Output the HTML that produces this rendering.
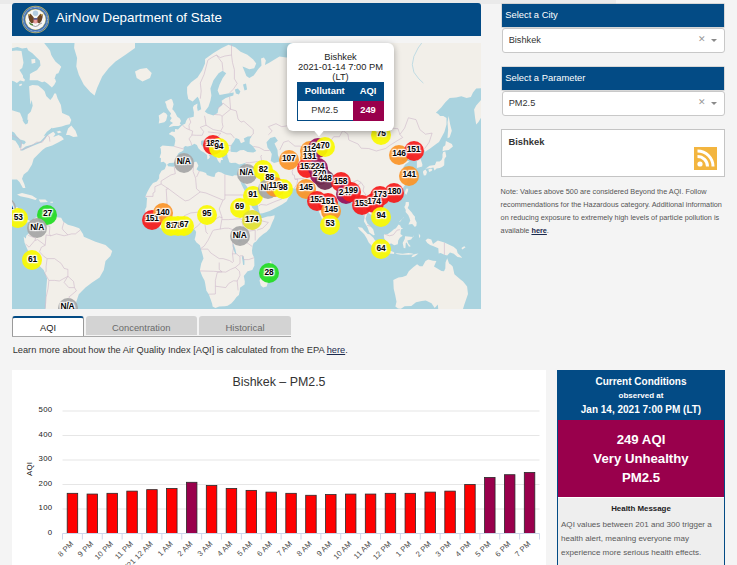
<!DOCTYPE html>
<html><head><meta charset="utf-8">
<style>
*{box-sizing:border-box;margin:0;padding:0}
html,body{width:737px;height:565px;overflow:hidden;background:#f4f4f4;font-family:"Liberation Sans",sans-serif;position:relative}
.abs{position:absolute}
.t{position:absolute;white-space:nowrap}
.mc{position:absolute;width:20px;height:20px;border-radius:50%;opacity:.93}
.mt{position:absolute;width:30px;height:20px;font-size:8.4px;font-weight:bold;line-height:20px;text-align:center;color:#000;letter-spacing:-0.2px;text-shadow:0 0 2px #fff,0 0 2px #fff,0 0 3px #fff,1px 1px 1px #fff,-1px -1px 1px #fff,1px -1px 1px #fff,-1px 1px 1px #fff}
</style></head><body>
<div class="abs" style="left:0;top:0;width:616px;height:4px;background:#eaeaea"></div>
<div class="abs" style="left:12px;top:3px;width:469px;height:33px;background:#034b85;border-radius:3px 3px 0 0"></div>
<svg class="abs" style="left:21px;top:5px" width="29" height="29" viewBox="0 0 29 29">
    <circle cx="14.5" cy="14.5" r="13.7" fill="#cdb85a"/>
    <circle cx="14.5" cy="14.5" r="13.1" fill="#3f70b0"/>
    <circle cx="14.5" cy="14.5" r="12" fill="none" stroke="#c9d6ea" stroke-width="0.9" stroke-dasharray="0.8 0.6"/>
    <circle cx="14.5" cy="14.5" r="10.4" fill="#d9c56a"/>
    <circle cx="14.5" cy="14.5" r="9.9" fill="#f7f7f7"/>
    <circle cx="14.5" cy="8.3" r="2.7" fill="#b3cde3"/>
    <path d="M7.2 9.5 L9.5 8.8 L11.5 11 L13 13 L12.8 17.5 L10.5 18.5 L8.5 16 L7.5 12.5Z" fill="#6b4526"/>
    <path d="M21.8 9.5 L19.5 8.8 L17.5 11 L16 13 L16.2 17.5 L18.5 18.5 L20.5 16 L21.5 12.5Z" fill="#6b4526"/>
    <path d="M7.2 9.5 L9.5 8.8 L8.6 11Z M21.8 9.5 L19.5 8.8 L20.4 11Z" fill="#c9a94a"/>
    <path d="M12.6 13.2 H16.4 V17.6 Q14.5 19.6 12.6 17.6Z" fill="#d65a5a"/>
    <rect x="12.6" y="13.2" width="3.8" height="1.4" fill="#3a5c9c"/>
    <path d="M13.3 14.8 V18 M14.5 14.8 V18.8 M15.7 14.8 V18" stroke="#fff" stroke-width="0.45"/>
    <path d="M8.3 17.5 Q9.5 20 12 20" stroke="#4f8a3a" stroke-width="1.3" fill="none"/>
    <path d="M17 20 L21 18" stroke="#888" stroke-width="0.8"/>
    <path d="M11.5 20.5 Q14.5 22.5 17.5 20.5" stroke="#777" stroke-width="0.7" fill="none"/>
    </svg>
<div class="t" style="left:55.80px;top:10.70px;width:250px;font-size:13.35px;line-height:14.912px;text-align:left;font-weight:normal;color:#fff;">AirNow Department of State</div>
<div class="abs" id="map" style="left:12px;top:43px;width:469px;height:266px;background:#aad3df;overflow:hidden"><svg width="469" height="266" viewBox="0 0 469 266" style="position:absolute;left:0;top:0"><path d="M62.6,-0.8 62.1,5.0 65.1,15.0 64.3,23.4 66.8,31.7 71.8,41.7 78.5,49.2 82.6,52.6 85.1,45.1 90.2,33.4 96.8,25.0 103.5,18.4 113.5,11.7 123.0,5.0 123.0,-0.8ZM25.0,-0.8 31.7,-0.8 36.7,6.7 40.1,13.4 43.4,18.4 49.2,23.4 46.7,29.2 42.6,31.7 41.7,28.4ZM-0.3,-0.3 31.9,-0.3 35.3,4.1 38.0,7.5 39.0,10.9 37.0,13.9 41.4,18.0 47.5,21.7 49.2,24.1 46.8,28.5 44.1,30.9 42.1,37.3 17.6,37.3 18.0,31.9 22.4,29.2 25.1,27.1 28.5,22.4 27.8,17.6 24.4,14.2 20.4,10.2 16.3,7.5 14.9,4.7 10.2,5.4 5.4,4.1 -0.3,5.4ZM19.3,16.3 23.1,15.9 23.4,19.7 19.7,20.7ZM-0.3,8.1 4.1,7.5 9.5,8.1 11.5,19.7 10.2,25.1 7.5,27.1 10.9,32.6 11.5,37.3 -0.3,37.3ZM-0.4,26.6 4.9,26.6 6.5,30.3 10.6,34.3 13.0,36.8 12.2,38.4 8.1,37.6 4.9,40.0 2.4,38.4 -0.4,37.6ZM6.9,41.7 9.4,40.4 10.2,42.1 7.7,43.3ZM17.9,31.1 20.4,29.4 26.1,26.6 44.0,26.6 44.4,31.1 42.3,33.5 44.0,38.4 42.3,41.7 39.9,44.5 35.8,40.8 32.6,38.4 30.1,39.2 24.4,36.8 21.2,35.1 17.9,33.5ZM41.5,26.6 48.0,26.6 46.4,30.3 44.0,31.1ZM-5.0,65.8 8.0,69.7 10.9,76.5 13.8,81.3 15.3,77.4 15.8,71.6 18.7,68.7 20.7,62.8 19.7,57.0 18.4,61.8 17.9,55.5 17.1,43.3 20.4,42.1 26.1,42.5 30.1,45.7 32.6,48.2 34.2,53.1 38.3,57.1 40.7,53.9 42.3,50.6 44.0,50.6 45.6,55.5 48.9,62.0 50.1,70.1 57.1,72.9 59.3,77.1 57.7,81.3 54.0,81.9 49.7,83.5 44.4,84.5 39.2,85.6 34.9,88.7 31.7,93.0 36.0,91.9 41.3,88.7 43.4,90.9 41.3,94.0 46.6,91.9 49.7,93.5 51.9,96.2 46.6,99.3 40.2,102.5 33.9,104.6 30.7,106.7 25.4,112.0 21.7,115.7 20.0,121.5 15.9,128.2 11.7,131.6 10.0,135.7 12.5,141.6 13.4,144.9 10.9,144.9 7.5,139.1 5.0,136.6 -0.8,136.6ZM54.0,91.9 56.1,85.6 59.3,82.4 63.5,87.7 65.6,93.5 61.4,94.0 57.1,91.9ZM44.4,88.7 47.6,87.7 49.7,89.3 46.6,90.3ZM5.0,151.6 10.0,149.9 20.0,152.4 25.0,155.8 23.4,157.1 16.7,154.9 8.3,153.3ZM26.7,156.6 33.4,156.6 35.9,159.1 28.4,159.4ZM38.4,158.8 40.9,158.8 40.9,159.8 38.4,159.8ZM-8.5,164.0 -0.9,164.4 5.7,164.2 7.8,169.9 7.2,173.8 11.4,177.6 15.2,176.6 19.0,178.4 22.8,174.9 27.5,173.2 30.3,171.1 33.2,172.8 36.9,174.7 44.5,174.3 49.2,174.7 51.1,178.6 55.9,181.8 61.5,183.3 67.2,185.2 71.0,190.9 71.8,193.7 83.5,198.7 93.5,202.1 100.2,207.9 98.5,212.9 93.5,217.9 91.8,227.1 87.6,234.6 80.1,239.6 73.5,244.6 66.8,251.3 64.3,258.8 62.6,267.2 33.4,267.2 34.2,247.1 35.1,235.4 31.7,227.1 25.0,220.4 18.4,212.9 15.0,205.4 12.5,199.5 11.7,193.7 13.9,195.6 14.2,192.8 17.1,190.0 19.0,181.4 17.1,178.6 13.3,180.5 8.6,178.6 3.3,174.7 0.1,169.9 -8.5,167.0ZM123.0,28.4 128.0,25.9 134.7,25.0 139.7,30.1 138.0,35.1 130.5,38.4 124.7,35.1ZM152.9,58.8 155.4,57.6 159.1,55.7 160.3,57.0 161.6,61.3 160.3,66.2 161.6,67.5 163.4,70.0 165.3,73.7 167.8,75.5 169.0,78.0 167.8,80.5 169.0,81.7 166.5,83.0 161.6,83.0 156.6,84.2 158.5,81.7 161.0,79.9 157.9,78.0 159.7,74.9 157.9,73.1 159.1,70.6 156.6,67.5 154.8,64.4 154.1,61.3ZM146.7,72.4 151.7,69.3 154.1,70.6 155.4,72.4 154.1,77.4 152.3,79.2 146.7,80.5 147.3,76.8ZM193.1,15.9 201.5,10.0 209.8,5.0 216.5,1.7 223.2,4.2 228.6,8.8 235.4,11.7 241.2,16.6 244.2,20.4 242.2,25.3 237.3,26.3 232.5,24.3 230.5,23.4 232.5,28.2 234.4,33.1 237.3,35.1 241.7,32.6 246.1,26.3 249.5,22.4 249.0,15.6 251.9,14.6 253.9,17.5 252.9,21.9 256.8,20.0 261.7,17.0 267.5,13.6 274.3,14.6 300.0,12.0 310.0,-5.0 475.0,-5.0 475.0,44.8 464.2,45.4 461.0,49.6 458.9,53.9 454.6,54.9 449.3,53.3 444.0,54.4 437.7,54.9 433.4,59.2 429.2,64.5 423.9,69.8 426.0,70.8 428.1,73.0 431.3,73.0 434.5,75.1 434.5,81.5 432.4,88.9 427.0,99.0 424.5,100.7 417.8,105.7 412.8,109.0 412.9,106.2 411.0,110.0 408.5,115.4 410.4,121.6 410.2,123.5 404.9,125.1 404.9,118.1 402.3,114.9 401.0,112.2 396.8,110.8 394.5,110.0 395.5,114.0 391.7,112.2 388.5,114.5 389.8,116.9 391.3,118.8 394.0,117.8 397.6,118.3 393.2,121.6 391.1,124.4 394.2,129.6 396.2,132.5 396.0,134.7 395.5,138.4 391.9,143.7 387.9,148.5 381.7,151.4 379.4,152.4 374.7,153.6 373.7,155.5 372.8,153.0 370.9,152.8 369.0,154.0 367.1,156.1 365.8,158.1 367.5,161.1 370.5,164.0 372.2,168.9 372.2,172.8 368.0,174.9 364.3,178.4 363.3,174.7 360.5,172.8 356.7,170.3 355.7,168.9 354.8,171.8 353.5,175.7 355.4,180.5 357.6,182.4 361.2,186.2 362.7,192.1 361.4,192.2 357.3,189.4 355.4,184.3 352.0,178.6 352.3,174.7 350.8,167.9 350.3,163.0 346.3,164.4 344.0,164.0 344.4,159.1 342.5,156.1 340.2,154.0 339.3,151.0 336.8,151.8 333.0,152.4 330.2,153.4 329.8,155.1 326.4,157.5 323.2,160.7 321.1,162.8 317.9,165.0 317.5,169.7 316.6,175.1 315.1,177.2 312.2,179.3 310.0,176.1 308.4,172.2 306.7,167.9 304.7,163.0 303.3,158.1 303.0,153.4 302.2,152.4 299.6,154.7 296.1,151.4 298.4,150.4 295.2,148.9 292.4,146.2 287.6,145.4 282.1,145.4 276.8,144.6 274.0,144.1 272.1,141.4 268.7,142.5 263.0,139.7 260.6,136.2 257.6,135.2 256.4,136.9 259.4,141.6 260.6,143.3 263.0,143.7 263.2,146.9 265.9,147.5 268.7,147.1 270.6,145.0 272.1,142.9 272.5,146.9 276.3,148.7 278.7,151.0 276.3,155.1 274.8,158.3 270.0,161.5 264.4,164.6 257.7,167.9 250.7,170.3 247.9,170.5 246.6,166.4 246.0,163.0 243.2,157.1 239.8,153.0 237.9,147.9 234.7,143.3 231.8,139.3 231.6,136.2 230.5,139.5 230.3,139.9 227.3,135.4 229.5,141.6 232.8,147.9 236.0,156.9 238.4,160.1 240.3,164.8 243.6,168.3 247.1,172.6 248.8,174.9 250.7,174.9 255.5,173.6 258.7,173.2 262.7,172.2 262.3,174.9 260.2,179.5 257.9,185.2 254.5,189.0 251.3,190.9 247.0,194.7 244.1,198.5 241.7,200.0 240.7,202.5 240.0,207.6 240.3,210.8 242.2,214.7 242.4,222.4 240.3,227.0 235.6,228.3 231.8,232.9 232.8,238.4 232.6,241.5 228.0,244.8 227.8,247.8 226.9,252.1 224.3,254.2 222.4,257.1 219.5,260.2 215.7,262.7 212.9,263.2 207.2,263.4 203.4,265.0 200.6,263.6 200.2,260.9 198.7,256.4 196.8,251.2 194.4,247.8 193.0,239.4 192.5,237.4 190.2,233.3 187.9,227.3 189.2,220.5 191.5,215.6 190.6,211.8 188.9,206.1 187.9,202.3 184.5,199.4 182.6,196.6 183.6,192.8 184.1,189.0 183.0,187.1 181.7,186.0 178.8,186.4 177.0,186.6 175.1,184.1 173.2,182.6 170.3,182.8 167.5,183.3 163.7,185.2 159.9,185.0 157.1,184.8 151.4,186.4 147.6,184.5 143.8,181.6 140.6,178.8 138.2,174.7 136.3,172.8 133.8,170.9 133.1,166.6 134.4,164.0 134.8,158.1 135.1,155.1 133.2,154.0 135.3,148.9 138.2,143.7 141.0,139.9 144.8,138.4 147.1,135.4 147.2,131.9 149.5,127.8 152.7,126.2 154.4,122.1 153.7,120.4 151.6,118.8 148.8,119.3 149.0,115.2 147.6,114.5 149.1,110.0 148.8,105.7 148.0,104.4 150.5,102.6 156.1,103.1 162.2,103.4 163.3,97.8 162.8,95.1 160.9,92.9 156.7,90.9 159.9,88.6 162.8,88.9 163.1,86.0 166.0,86.6 168.6,83.7 170.3,81.9 173.2,80.7 174.3,77.6 176.0,75.1 178.8,74.4 181.7,73.8 181.9,69.6 180.9,64.5 181.9,62.5 185.5,60.4 185.1,64.5 185.8,67.9 189.2,66.2 187.9,59.3 186.8,55.7 185.5,53.8 180.7,58.6 176.2,56.0 175.1,50.0 175.1,44.1 179.2,39.2 185.5,34.5 190.2,27.3 193.0,20.6ZM181.9,104.7 183.6,104.4 183.6,107.5 183.0,108.5 181.9,107.2ZM181.1,109.8 183.2,109.0 184.1,110.8 183.8,114.2 182.4,114.7 181.5,114.2ZM189.1,116.6 191.7,116.4 195.1,116.1 194.2,119.0 194.2,120.2 189.2,117.8ZM210.1,123.2 212.0,122.8 215.4,123.2 214.8,123.9 211.0,123.9ZM226.7,123.9 228.0,123.0 231.1,122.3 229.9,124.2 228.0,124.9ZM316.6,176.1 318.9,178.6 320.6,181.4 319.4,182.9 317.3,183.3 316.6,180.5ZM371.1,157.7 373.7,155.9 375.6,156.9 374.5,159.1 372.8,159.7 371.3,159.1ZM394.5,145.4 396.2,145.8 396.0,147.9 394.2,152.0 392.8,150.0 393.6,146.9ZM411.2,128.0 413.5,126.5 415.0,128.9 414.0,132.3 411.9,132.5 411.0,129.6ZM416.3,126.5 419.1,125.5 420.5,126.7 419.5,128.0 417.2,128.9ZM413.3,125.5 415.3,125.5 419.1,124.9 421.4,124.6 422.5,127.4 424.6,125.5 427.6,124.9 430.1,123.9 432.2,122.3 432.4,116.1 434.3,113.2 433.3,108.5 431.2,109.0 430.5,111.3 430.5,114.5 429.5,116.9 427.6,118.5 424.4,118.5 422.9,122.1 417.6,122.8 414.4,124.9ZM430.5,108.3 432.8,107.5 436.7,107.0 440.9,103.6 439.9,101.0 433.9,98.1 433.3,102.3 431.0,103.9ZM436.6,73.0 438.2,81.5 439.8,87.8 437.7,94.2 435.5,95.3 436.1,86.8 435.5,79.3ZM469.5,56.5 464.2,62.4 462.1,66.6 463.1,75.1 464.2,81.5 466.3,79.3 469.5,74.0ZM393.8,159.1 396.8,159.1 397.0,162.1 395.7,165.0 400.2,169.9 400.6,170.9 403.0,173.8 402.9,176.1 404.7,179.5 404.4,182.8 402.9,184.1 400.2,181.0 396.4,181.4 398.3,177.6 397.4,174.7 396.2,172.0 393.6,168.9 393.8,167.0 392.3,164.0 393.4,162.1ZM387.3,178.6 391.3,175.1 391.9,173.8 390.4,175.7 387.9,179.1ZM371.8,191.9 373.0,190.9 375.6,191.3 379.4,188.6 381.9,186.2 383.9,185.2 386.6,181.6 388.3,182.6 389.2,184.7 391.1,185.2 388.9,186.6 388.5,190.9 390.7,192.8 387.9,194.7 386.2,197.5 385.8,201.3 382.2,202.3 379.4,200.6 376.9,201.1 374.1,200.4 373.7,197.5 372.2,195.6ZM345.9,184.1 350.1,184.8 352.3,187.5 355.7,190.9 357.6,191.3 361.4,194.7 362.7,197.0 365.8,200.0 366.2,203.2 365.8,205.7 363.3,205.1 359.2,202.3 356.7,199.4 354.8,195.6 352.2,191.3 349.9,189.0 347.2,186.6ZM364.6,207.6 367.1,206.1 370.9,207.0 374.7,207.2 378.4,207.8 382.2,209.3 382.0,211.0 377.5,210.5 373.7,210.1 369.9,209.3 366.2,208.7ZM383.2,210.8 385.1,210.3 390.7,210.8 396.4,210.1 400.2,210.5 402.1,211.2 396.4,211.8 388.9,211.8ZM400.6,212.2 403.0,211.0 406.5,210.6 402.1,213.7 399.3,214.3ZM391.7,205.1 393.4,205.3 393.8,200.0 394.5,199.6 397.0,203.8 398.7,203.2 396.4,200.4 395.3,197.5 399.1,196.4 402.1,191.9 401.2,193.9 393.0,193.2 392.8,195.8 390.7,200.0ZM406.8,190.5 408.3,192.8 407.8,195.3 407.0,193.8ZM413.5,197.3 415.9,195.5 419.3,196.4 421.0,200.9 425.8,197.5 432.4,199.6 441.5,203.8 444.7,206.5 445.6,209.9 450.3,214.7 445.6,214.1 441.8,210.8 438.0,209.5 435.2,212.4 432.4,211.8 428.6,210.1 426.7,210.6 426.3,205.3 421.0,203.0 418.2,201.9 415.3,200.0ZM449.4,205.1 452.2,203.2 453.6,204.2 450.3,206.6ZM381.3,237.0 381.7,245.7 383.2,252.1 384.5,258.7 383.4,263.6 386.0,265.5 388.9,265.7 392.6,263.2 399.3,262.9 404.0,259.3 409.7,258.0 413.8,257.5 419.5,260.2 422.7,265.0 425.8,261.4 426.3,267.1 430.5,270.1 436.2,274.2 441.8,274.9 449.4,271.3 452.2,262.0 456.0,251.0 455.1,243.6 451.1,238.4 448.5,236.4 442.4,231.3 440.7,223.4 439.0,221.8 437.1,220.5 435.2,215.3 433.5,219.5 433.3,225.4 432.0,228.3 429.5,227.9 422.0,223.4 424.4,218.0 421.0,217.8 416.3,216.4 413.5,218.0 410.6,223.2 407.8,223.2 405.1,221.3 401.2,224.2 396.8,228.3 394.5,232.5 390.4,233.9 386.4,234.5ZM258.9,217.6 260.6,223.4 259.8,226.4 258.9,229.3 256.4,237.4 254.7,243.4 251.1,244.6 248.8,242.5 247.5,237.4 249.6,232.9 248.8,227.3 253.2,225.0 256.2,221.8Z" fill="#f2efe9"/><path d="M-0.3,88.4 2.2,89.5 4.9,93.3 8.2,96.6 12.5,97.7 13.9,99.3 12.0,101.5 9.8,100.4 9.2,104.2 7.6,105.3 6.5,102.5 3.3,97.7 -0.3,96.6ZM8.2,107.4 13.6,103.6 20.7,101.5 24.5,99.8 28.3,98.5 32.1,94.4 35.3,90.0 40.1,84.6 40.1,86.2 36.4,91.1 33.2,95.5 28.8,99.8 25.0,101.2 21.2,102.8 14.7,105.5 10.9,107.4ZM10.3,76.7 16.3,76.7 15.8,80.3 13.6,81.6 12.0,79.7ZM155.0,121.6 157.3,120.0 161.8,119.7 164.1,117.8 165.0,113.5 166.0,110.8 167.5,109.5 169.8,108.5 171.7,107.0 171.5,104.4 173.2,103.1 175.8,103.6 179.4,102.6 182.4,100.8 184.9,102.1 186.4,105.2 188.9,107.7 192.1,109.5 195.1,112.0 195.3,116.4 196.8,115.7 198.0,114.0 196.8,112.0 200.6,111.8 197.8,109.5 195.9,107.2 192.1,105.5 188.9,101.3 189.2,97.8 191.5,97.3 193.0,99.2 194.9,101.8 196.6,103.1 199.8,105.5 202.3,107.5 202.3,111.0 203.8,113.2 205.1,115.7 205.9,117.8 208.2,120.4 209.1,117.1 211.0,116.9 208.9,110.8 210.8,110.0 214.8,110.0 215.4,112.0 215.4,113.7 216.3,115.7 217.3,119.3 219.0,120.0 223.5,119.7 227.1,121.4 229.9,120.9 233.5,119.7 233.3,122.8 233.5,125.1 232.2,128.5 231.6,130.7 230.5,132.3 226.7,132.5 222.4,132.3 220.5,133.2 212.9,131.6 209.3,129.4 206.3,128.7 203.6,130.3 202.5,134.1 199.3,133.4 194.9,131.9 194.0,130.1 190.6,128.7 186.8,128.0 184.5,126.2 186.4,122.8 185.1,119.7 184.1,118.5 181.7,119.5 177.9,119.3 171.3,119.7 166.0,121.8 164.5,122.3 161.4,123.7 156.1,123.2 155.4,121.8ZM218.6,108.8 218.6,103.6 219.7,101.3 221.8,98.6 223.7,95.1 227.1,96.2 229.0,100.2 232.8,98.6 231.8,95.6 235.6,93.4 239.8,93.2 237.9,95.9 237.5,100.5 240.7,103.1 244.3,108.0 241.3,109.5 235.6,109.0 231.8,107.0 228.0,107.2 224.8,109.3 220.8,109.0ZM254.5,99.2 258.3,95.1 263.0,93.7 265.9,97.8 262.5,100.5 265.5,107.0 265.9,112.0 267.8,116.9 267.6,118.5 262.1,120.0 258.7,118.1 259.8,111.0 257.9,107.5 255.5,104.4ZM198.4,45.5 201.5,37.3 206.6,30.2 210.6,27.7 214.2,30.2 210.6,35.3 207.6,41.4 205.6,47.5 207.6,52.1 215.7,50.6 221.8,49.6 221.3,52.6 213.7,55.1 209.6,57.7 210.6,61.8 206.6,64.8 205.6,69.9 201.5,72.4 195.4,70.4 192.8,68.4 196.4,63.8 198.4,57.7 199.4,52.6ZM222.8,46.5 225.9,45.5 228.4,48.5 226.9,51.6 223.9,50.6ZM231.0,41.4 234.0,40.4 235.1,46.5 232.5,47.5ZM220.8,200.9 221.6,201.3 223.3,206.1 224.3,210.8 223.5,211.0 221.6,207.0 220.7,203.2ZM230.5,212.8 231.4,213.1 232.4,217.6 232.4,221.8 231.1,222.0 230.5,217.6 229.9,214.7ZM225.8,194.3 229.5,194.1 230.5,196.6 229.0,199.8 226.1,199.1 225.4,196.6Z" fill="#aad3df"/><path d="M-14.1,88.1 -2.8,90.9 5.7,95.1 9.5,99.2 8.6,107.0 16.1,104.4 20.9,101.8 24.6,99.2 30.3,99.2 33.2,95.1 35.1,92.3 37.3,93.7 37.9,98.6M29.4,172.8 28.4,177.6 29.4,181.4 37.9,183.3 37.3,190.9 38.8,192.8M52.1,178.6 50.2,185.2 51.1,187.1 55.9,191.9M68.2,187.1 63.4,190.9 59.6,190.9 52.1,192.8 44.5,190.9 38.8,192.8 34.1,191.9 33.2,202.3 29.4,204.2 27.5,208.9 32.2,213.7 35.1,215.6 42.6,215.6 49.2,220.5 52.1,225.4 55.9,226.4 55.9,233.3 61.5,238.4 62.5,244.6 64.4,247.8 56.8,254.2 65.3,262.0M35.1,215.6 34.1,223.4 34.1,228.3 32.6,229.9M36.9,237.4 42.6,237.4 47.3,238.0 55.9,233.3M55.9,233.3 52.1,239.4 56.8,244.6 62.5,244.6M32.6,229.9 36.9,237.4 36.0,245.7 34.1,254.2 33.2,265.5M13.7,201.1 17.1,204.2 22.8,197.5 23.7,195.1 16.1,192.4M33.2,202.3 25.6,196.6 22.8,197.5M155.2,165.0 155.2,163.0 154.2,146.0 156.5,145.8M162.2,123.9 163.3,130.7 159.0,131.9 149.1,138.0 149.1,141.0 156.5,145.8 167.5,154.0 173.2,157.9 177.0,157.1 188.3,148.9M149.1,141.0 142.9,143.7 142.9,148.9 141.0,150.0 141.0,153.4 133.4,153.4M142.9,166.4 144.8,165.0 155.2,165.0M212.9,131.6 212.9,152.0 235.6,152.0M188.3,148.9 194.0,150.0 211.0,157.1 212.9,156.1 212.9,152.0M181.7,119.5 181.1,128.5 183.6,135.2 184.5,145.8 188.3,148.9M187.4,128.0 184.5,134.1M211.0,157.1 207.2,166.0 210.1,174.7 208.2,186.2M172.2,172.8 178.8,169.9 189.2,168.9 192.1,169.9 190.2,177.6 186.4,182.4 181.7,186.0M172.4,182.8 172.4,172.8M159.9,185.0 160.5,173.8M167.9,183.1 165.6,173.8M210.1,176.6 216.7,176.6 228.0,175.7 229.9,176.6M234.7,167.9 231.8,175.7 229.9,178.6 231.8,185.2M246.0,171.8 248.8,177.6 256.4,179.5 250.7,185.2 245.1,187.1M231.8,185.2 237.5,188.1 243.2,187.1 243.2,197.5M229.9,187.1 231.8,192.8 229.9,196.6 236.6,200.8 240.3,203.6M188.7,206.1 195.9,206.1 198.7,209.9 207.2,215.6 211.0,215.6 217.6,217.6 220.5,219.5 221.4,218.5 220.5,210.8 221.4,205.1 220.5,199.4 222.4,191.9 224.3,190.3 223.3,187.5 216.7,185.2 212.9,185.2 207.2,186.2 201.5,187.1 200.6,188.1 198.7,191.9 195.9,197.5 192.1,203.2 188.7,205.5M193.0,171.8 195.9,179.5 201.5,177.6 207.2,173.8 210.1,174.7M193.0,181.4 194.0,189.0 195.9,190.9M187.9,227.9 201.5,228.3 210.1,228.9 213.8,229.1 218.6,226.4 223.3,224.4 228.0,220.5 228.0,213.7 224.3,210.8 220.5,210.8M207.2,219.5 207.2,226.4 210.1,228.9M223.3,224.4 227.5,228.3 228.0,232.3 225.2,238.0M196.8,251.2 203.4,251.0 203.4,243.2 213.8,244.6 216.7,240.5 221.4,237.8 225.2,238.0 226.1,247.4M203.4,243.2 203.4,237.4 205.3,229.3 210.1,228.9M242.2,214.7 236.6,216.6 231.8,216.6 230.9,212.8 228.0,212.8M162.2,103.4 171.7,106.0M170.3,81.9 173.5,85.1 177.0,86.6 180.7,88.1 179.8,92.3 177.0,95.9 178.8,99.2 179.8,102.3M177.0,74.8 178.8,79.1 177.0,82.2 177.3,86.6M179.8,92.0 184.5,92.3 190.2,92.3 191.7,88.6 188.3,84.3 194.0,82.2 193.2,76.0 192.5,72.8M194.0,82.2 201.2,86.6 208.7,88.1 211.0,83.7 210.1,79.1 210.1,73.2 208.2,71.9 202.5,71.5M205.3,66.2 211.0,60.0 218.6,66.2 217.6,53.8M210.1,73.2 218.6,66.2 224.3,67.9 226.1,76.0 229.0,79.1 231.8,78.2 241.3,86.6 241.3,90.9 238.4,93.7M208.7,88.1 214.8,90.9 219.0,90.9 222.4,95.1M208.2,101.8 219.5,102.6M195.9,88.9 208.7,90.3 203.4,96.5 197.8,96.5 195.9,94.3M191.5,97.3 195.9,95.1 201.5,97.0 208.2,101.3 209.1,105.7 208.2,109.0 204.4,109.5 202.3,107.2M215.4,107.7 218.6,107.0M208.9,108.8 214.8,108.3M188.3,55.7 189.2,48.1 188.3,40.0 192.1,31.4 195.9,17.1 199.7,14.6 204.4,12.0 208.2,14.6 212.9,13.0 219.5,12.0 219.5,1.5M211.0,27.8 210.1,19.6 204.4,12.0M217.6,50.0 221.4,46.1 225.2,40.5 222.4,35.8 222.4,26.8 220.5,19.6 219.5,12.0M233.7,119.7 237.5,119.7 246.0,118.5 249.8,118.8 248.8,113.2 249.8,112.0M241.3,103.4 247.0,104.4 252.6,107.5 257.6,107.5M231.8,136.2 235.6,133.0 239.4,130.7 245.1,133.0 250.7,136.2 255.5,137.3M239.4,130.7 239.0,127.6 235.2,130.1M249.8,118.8 251.7,123.9 252.6,128.5 255.5,130.7 256.4,135.2M246.6,163.2 248.8,161.5 254.5,162.1 264.0,158.1 269.7,156.1 270.6,150.6 264.0,148.9M281.4,120.4 281.0,126.2 280.1,128.5 280.8,131.9 282.3,132.1 282.9,136.2 285.7,136.2 284.8,141.6 282.1,145.4M282.9,136.2 291.4,135.4 294.3,131.9 298.0,130.7 299.9,126.2 300.9,120.4 306.6,119.3M267.8,118.5 273.4,116.9 279.1,118.1 281.4,120.4 286.7,121.6 291.4,118.1 294.3,118.8 299.9,117.1 306.6,118.1M256.4,91.8 260.2,88.1 256.4,83.7 264.0,80.7 269.7,83.7 275.3,82.8 282.0,82.2 280.1,77.6 281.0,72.8 288.6,70.9 296.1,68.6 304.7,72.8 310.3,72.8 313.2,76.3 317.0,82.2 322.6,82.2 326.4,85.7 330.8,87.5M267.8,107.0 271.6,99.2 276.3,97.8 282.9,103.1 288.6,103.1 294.3,109.5 299.9,105.7 305.6,103.9 317.0,104.9 317.9,99.2 321.7,93.7 327.4,93.7 330.8,87.5M330.8,87.5 335.9,91.2 336.8,97.0 346.1,101.0 349.1,105.2 356.7,105.5 364.3,108.0 373.7,105.5 377.5,102.6 385.1,97.8 390.7,94.5 387.9,91.5 392.6,85.1 396.4,74.8 404.0,76.6 407.8,86.6 413.5,91.2 420.1,90.1 417.2,99.2 413.5,104.4 412.5,105.7M330.8,87.5 339.7,83.4 351.0,79.1 358.6,84.3 366.2,84.3 370.9,87.2 379.4,85.1 386.0,85.7 387.9,91.5M306.6,119.3 312.2,122.8 315.1,128.5 315.1,133.0 318.9,135.2 324.5,138.4 332.1,139.9 334.0,139.5 339.7,139.9 345.3,137.3 349.1,139.5 352.0,143.7 351.0,147.9 353.9,152.0 357.6,153.0 358.6,151.0 366.2,150.4 369.9,152.8M317.0,104.9 307.5,112.0 306.6,119.3M295.2,148.7 299.9,146.9 299.0,140.6 304.7,135.2 306.6,129.6 305.6,125.1M333.0,152.4 334.0,143.7 339.7,145.8 340.6,151.0 343.4,147.9 345.3,142.7 349.1,139.5M352.0,175.7 352.9,169.9 352.0,163.0 350.1,159.1 354.8,155.1 357.6,153.0M359.0,171.4 364.3,167.6 369.0,167.0 369.0,164.0 364.3,159.1 362.4,156.1 358.6,151.0M404.9,117.6 408.7,115.7M355.2,182.4 358.6,183.3M373.0,191.3 377.5,192.8 381.3,191.9 385.1,187.1 387.9,186.7M432.4,199.6 432.4,211.8" fill="none" stroke="#cdb7c9" stroke-width="0.6"/><path d="M410.3,-0.8 406.1,5.0 401.9,13.4 400.3,21.7 401.9,29.2 406.9,35.9 411.4,40.1" fill="none" stroke="#aad3df" stroke-width="0.7"/></svg><div class="mc" style="left:-15.7px;top:155.0px;background:#a6a6a6"></div><div class="mc" style="left:-3.7px;top:165.4px;background:#fafa00"></div><div class="mc" style="left:25.4px;top:161.5px;background:#22dd22"></div><div class="mc" style="left:15.2px;top:175.2px;background:#a6a6a6"></div><div class="mc" style="left:10.4px;top:207.3px;background:#fafa00"></div><div class="mc" style="left:45.5px;top:255.0px;background:#a6a6a6"></div><div class="mc" style="left:130.1px;top:166.6px;background:#f61a1a"></div><div class="mc" style="left:140.8px;top:160.3px;background:#fb9528"></div><div class="mc" style="left:148.5px;top:173.4px;background:#fafa00"></div><div class="mc" style="left:155.5px;top:173.4px;background:#fafa00"></div><div class="mc" style="left:162.0px;top:172.5px;background:#fafa00"></div><div class="mc" style="left:161.6px;top:109.9px;background:#a6a6a6"></div><div class="mc" style="left:190.6px;top:92.0px;background:#f61a1a"></div><div class="mc" style="left:196.8px;top:94.9px;background:#fafa00"></div><div class="mc" style="left:184.8px;top:161.5px;background:#fafa00"></div><div class="mc" style="left:217.5px;top:154.5px;background:#fafa00"></div><div class="mc" style="left:230.8px;top:143.0px;background:#fafa00"></div><div class="mc" style="left:229.8px;top:167.3px;background:#e0e030"></div><div class="mc" style="left:217.6px;top:183.3px;background:#a6a6a6"></div><div class="mc" style="left:224.5px;top:120.7px;background:#a6a6a6"></div><div class="mc" style="left:241.2px;top:117.3px;background:#fafa00"></div><div class="mc" style="left:247.6px;top:126.0px;background:#fafa00"></div><div class="mc" style="left:245.5px;top:135.6px;background:#a6a6a6"></div><div class="mc" style="left:252.9px;top:133.5px;background:#fb9528"></div><div class="mc" style="left:261.0px;top:135.8px;background:#fafa00"></div><div class="mc" style="left:266.7px;top:106.7px;background:#fb9528"></div><div class="mc" style="left:287.5px;top:98.0px;background:#fb9528"></div><div class="mc" style="left:287.5px;top:104.5px;background:#fb9528"></div><div class="mc" style="left:296.0px;top:94.5px;background:#980f58"></div><div class="mc" style="left:303.0px;top:94.0px;background:#fafa00"></div><div class="mc" style="left:284.5px;top:115.0px;background:#f61a1a"></div><div class="mc" style="left:295.5px;top:115.0px;background:#980f58"></div><div class="mc" style="left:297.5px;top:122.0px;background:#980f58"></div><div class="mc" style="left:303.0px;top:127.0px;background:#6e2a4e"></div><div class="mc" style="left:284.0px;top:135.5px;background:#fb9528"></div><div class="mc" style="left:318.5px;top:129.3px;background:#f61a1a"></div><div class="mc" style="left:323.5px;top:140.5px;background:#980f58"></div><div class="mc" style="left:329.0px;top:138.5px;background:#f61a1a"></div><div class="mc" style="left:294.6px;top:147.6px;background:#f61a1a"></div><div class="mc" style="left:306.0px;top:150.0px;background:#f61a1a"></div><div class="mc" style="left:309.0px;top:158.0px;background:#fb9528"></div><div class="mc" style="left:307.9px;top:171.6px;background:#fafa00"></div><div class="mc" style="left:339.5px;top:152.0px;background:#f61a1a"></div><div class="mc" style="left:352.0px;top:149.5px;background:#f61a1a"></div><div class="mc" style="left:358.0px;top:143.0px;background:#f61a1a"></div><div class="mc" style="left:372.3px;top:139.6px;background:#f61a1a"></div><div class="mc" style="left:387.3px;top:122.7px;background:#fb9528"></div><div class="mc" style="left:377.0px;top:102.0px;background:#fb9528"></div><div class="mc" style="left:391.5px;top:97.5px;background:#f61a1a"></div><div class="mc" style="left:359.3px;top:81.5px;background:#fafa00"></div><div class="mc" style="left:359.0px;top:163.5px;background:#fafa00"></div><div class="mc" style="left:359.0px;top:196.3px;background:#fafa00"></div><div class="mc" style="left:247.0px;top:220.3px;background:#22dd22"></div><div class="mt" style="left:-20.7px;top:153.4px">N/A</div><div class="mt" style="left:-8.7px;top:163.8px">53</div><div class="mt" style="left:20.4px;top:159.9px">27</div><div class="mt" style="left:10.2px;top:173.6px">N/A</div><div class="mt" style="left:5.4px;top:205.7px">61</div><div class="mt" style="left:40.5px;top:253.4px">N/A</div><div class="mt" style="left:125.1px;top:165.0px">151</div><div class="mt" style="left:135.8px;top:158.7px">140</div><div class="mt" style="left:143.5px;top:171.8px">81</div><div class="mt" style="left:150.5px;top:171.8px">78</div><div class="mt" style="left:157.0px;top:170.9px">67</div><div class="mt" style="left:156.6px;top:108.3px">N/A</div><div class="mt" style="left:185.6px;top:90.4px">188</div><div class="mt" style="left:191.8px;top:93.3px">94</div><div class="mt" style="left:179.8px;top:159.9px">95</div><div class="mt" style="left:212.5px;top:152.9px">69</div><div class="mt" style="left:225.8px;top:141.4px">91</div><div class="mt" style="left:224.8px;top:165.7px">174</div><div class="mt" style="left:212.6px;top:181.7px">N/A</div><div class="mt" style="left:219.5px;top:119.1px">N/A</div><div class="mt" style="left:236.2px;top:115.7px">82</div><div class="mt" style="left:242.6px;top:124.4px">88</div><div class="mt" style="left:240.5px;top:134.0px">N/A</div><div class="mt" style="left:247.9px;top:131.9px">118</div><div class="mt" style="left:256.0px;top:134.2px">98</div><div class="mt" style="left:261.7px;top:105.1px">107</div><div class="mt" style="left:282.5px;top:96.4px">113</div><div class="mt" style="left:282.5px;top:102.9px">131</div><div class="mt" style="left:291.0px;top:92.9px">249</div><div class="mt" style="left:298.0px;top:92.4px">70</div><div class="mt" style="left:279.5px;top:113.4px">152</div><div class="mt" style="left:290.5px;top:113.4px">224</div><div class="mt" style="left:292.5px;top:120.4px">270</div><div class="mt" style="left:298.0px;top:125.4px">448</div><div class="mt" style="left:279.0px;top:133.9px">145</div><div class="mt" style="left:313.5px;top:127.7px">158</div><div class="mt" style="left:318.5px;top:138.9px">247</div><div class="mt" style="left:324.0px;top:136.9px">199</div><div class="mt" style="left:289.6px;top:146.0px">152</div><div class="mt" style="left:301.0px;top:148.4px">151</div><div class="mt" style="left:304.0px;top:156.4px">145</div><div class="mt" style="left:302.9px;top:170.0px">53</div><div class="mt" style="left:334.5px;top:150.4px">153</div><div class="mt" style="left:347.0px;top:147.9px">174</div><div class="mt" style="left:353.0px;top:141.4px">173</div><div class="mt" style="left:367.3px;top:138.0px">180</div><div class="mt" style="left:382.3px;top:121.1px">141</div><div class="mt" style="left:372.0px;top:100.4px">146</div><div class="mt" style="left:386.5px;top:95.9px">151</div><div class="mt" style="left:354.3px;top:79.9px">75</div><div class="mt" style="left:354.0px;top:161.9px">94</div><div class="mt" style="left:354.0px;top:194.7px">64</div><div class="mt" style="left:242.0px;top:218.7px">28</div></div>
<div class="abs" style="left:287px;top:42.5px;width:107px;height:88.5px;background:#fff;border-radius:6px;box-shadow:0 2px 7px rgba(0,0,0,.33)"></div>
<svg class="abs" style="left:311px;top:127px" width="16" height="12" viewBox="0 0 16 12"><path d="M0 0 L16 0 L8 9.5Z" fill="#fff"/></svg>
<div class="t" style="left:287.00px;top:52.13px;width:107px;font-size:9.3px;line-height:10.388px;text-align:center;font-weight:normal;color:#222;">Bishkek</div>
<div class="t" style="left:287.00px;top:62.13px;width:107px;font-size:9.3px;line-height:10.388px;text-align:center;font-weight:normal;color:#222;">2021-01-14 7:00 PM</div>
<div class="t" style="left:287.00px;top:72.13px;width:107px;font-size:9.3px;line-height:10.388px;text-align:center;font-weight:normal;color:#222;">(LT)</div>
<div class="abs" style="left:297px;top:82px;width:87px;height:39px;border:1px solid #034b85;background:#fff"></div>
<div class="abs" style="left:297px;top:82px;width:87px;height:18.5px;background:#034b85"></div>
<div class="abs" style="left:352.5px;top:100.5px;width:31.5px;height:20.5px;background:#99004c"></div>
<div class="t" style="left:294.70px;top:86.44px;width:60px;font-size:9.4px;line-height:10.500px;text-align:center;font-weight:bold;color:#fff;">Pollutant</div>
<div class="t" style="left:348.00px;top:86.44px;width:40px;font-size:9.4px;line-height:10.500px;text-align:center;font-weight:bold;color:#fff;">AQI</div>
<div class="t" style="left:294.70px;top:105.33px;width:60px;font-size:9.3px;line-height:10.388px;text-align:center;font-weight:normal;color:#333;">PM2.5</div>
<div class="t" style="left:348.00px;top:105.24px;width:40px;font-size:9.4px;line-height:10.500px;text-align:center;font-weight:bold;color:#fff;">249</div>
<div class="abs" style="left:502px;top:4px;width:222px;height:23px;background:#034b85;box-shadow:0 0 0 0.5px #bbb"></div>
<div class="t" style="left:505.20px;top:10.24px;width:300px;font-size:9.4px;line-height:10.500px;text-align:left;font-weight:normal;color:#fff;">Select a City</div>
<div class="abs" style="left:501.5px;top:28.4px;width:223px;height:24.3px;background:#fff;border:1px solid #c8c8c8;border-radius:3px"></div>
<div class="t" style="left:508.70px;top:35.11px;width:300px;font-size:9.2px;line-height:10.276px;text-align:left;font-weight:normal;color:#333;">Bishkek</div>
<div class="t" style="left:696.00px;top:33.68px;width:12px;font-size:9px;line-height:10.053px;text-align:center;font-weight:normal;color:#999;">✕</div>
<div class="abs" style="left:711px;top:38.5px;width:0;height:0;border-left:3px solid transparent;border-right:3px solid transparent;border-top:3.2px solid #8a8a8a"></div>
<div class="abs" style="left:502px;top:67px;width:222px;height:23px;background:#034b85;box-shadow:0 0 0 0.5px #bbb"></div>
<div class="t" style="left:505.20px;top:73.24px;width:300px;font-size:9.4px;line-height:10.500px;text-align:left;font-weight:normal;color:#fff;">Select a Parameter</div>
<div class="abs" style="left:501.5px;top:91.4px;width:223px;height:24.3px;background:#fff;border:1px solid #c8c8c8;border-radius:3px"></div>
<div class="t" style="left:508.70px;top:98.11px;width:300px;font-size:9.2px;line-height:10.276px;text-align:left;font-weight:normal;color:#333;">PM2.5</div>
<div class="t" style="left:696.00px;top:96.68px;width:12px;font-size:9px;line-height:10.053px;text-align:center;font-weight:normal;color:#999;">✕</div>
<div class="abs" style="left:711px;top:101.5px;width:0;height:0;border-left:3px solid transparent;border-right:3px solid transparent;border-top:3.2px solid #8a8a8a"></div>
<div class="abs" style="left:501.4px;top:129.4px;width:223.2px;height:48px;background:#fff;border:1px solid #c4c4c4"></div>
<div class="t" style="left:508.40px;top:137.04px;width:300px;font-size:9.4px;line-height:10.500px;text-align:left;font-weight:bold;color:#333;">Bishkek</div>
<svg class="abs" style="left:694px;top:147px" width="23" height="23" viewBox="0 0 23 23"><rect width="23" height="23" fill="#f3b53f"/>
    <circle cx="6" cy="17" r="2.6" fill="#fff"/><path d="M3.5 9.5 A10 10 0 0 1 13.5 19.5" stroke="#fff" stroke-width="3" fill="none"/><path d="M3.5 4 A15.5 15.5 0 0 1 19 19.5" stroke="#fff" stroke-width="3" fill="none"/></svg>
<div class="t" style="left:500.60px;top:187.82px;width:240px;font-size:7.3px;line-height:8.154px;text-align:left;font-weight:normal;color:#555;white-space:nowrap">Note: Values above 500 are considered Beyond the AQI. Follow</div>
<div class="t" style="left:500.60px;top:200.82px;width:240px;font-size:7.3px;line-height:8.154px;text-align:left;font-weight:normal;color:#555;white-space:nowrap">recommendations for the Hazardous category. Additional information</div>
<div class="t" style="left:500.60px;top:213.82px;width:240px;font-size:7.3px;line-height:8.154px;text-align:left;font-weight:normal;color:#555;white-space:nowrap">on reducing exposure to extremely high levels of particle pollution is</div>
<div class="t" style="left:500.60px;top:226.82px;width:240px;font-size:7.3px;line-height:8.154px;text-align:left;font-weight:normal;color:#555;white-space:nowrap">available <b style="color:#1b2a4e;text-decoration:underline">here</b>.</div>
<div class="abs" style="left:12px;top:335.5px;width:279px;height:1px;background:#a8a8a8"></div>
<div class="abs" style="left:12px;top:316px;width:71.5px;height:20px;background:#fff;border:1px solid #9a9a9a;border-top:2px solid #034b85;border-bottom:none;border-radius:3px 3px 0 0"></div>
<div class="abs" style="left:86.3px;top:316.4px;width:110.5px;height:19.1px;background:#d3d3d3;border-radius:3px 3px 0 0"></div>
<div class="abs" style="left:199px;top:316.4px;width:92px;height:19.1px;background:#d3d3d3;border-radius:3px 3px 0 0"></div>
<div class="t" style="left:18.00px;top:322.93px;width:60px;font-size:9.3px;line-height:10.388px;text-align:center;font-weight:normal;color:#222;">AQI</div>
<div class="t" style="left:91.20px;top:322.84px;width:100px;font-size:9.4px;line-height:10.500px;text-align:center;font-weight:normal;color:#6a6a6a;">Concentration</div>
<div class="t" style="left:205.00px;top:322.76px;width:80px;font-size:9.5px;line-height:10.611px;text-align:center;font-weight:normal;color:#6a6a6a;">Historical</div>
<div class="t" style="left:12.70px;top:345.07px;width:400px;font-size:9.25px;line-height:10.332px;text-align:left;font-weight:normal;color:#333;white-space:nowrap">Learn more about how the Air Quality Index [AQI] is calculated from the EPA <span style="text-decoration:underline;color:#1b2a4e">here</span>.</div>
<div class="abs" style="left:12px;top:370px;width:534px;height:195px;background:#fff"><svg width="534" height="195" viewBox="0 0 534 195" style="position:absolute;left:0;top:0;font-family:'Liberation Sans',sans-serif"><rect x="50.5" y="138.50" width="477.00" height="1" fill="#e6e6e6"/><rect x="50.5" y="114.00" width="477.00" height="1" fill="#e6e6e6"/><rect x="50.5" y="89.50" width="477.00" height="1" fill="#e6e6e6"/><rect x="50.5" y="65.00" width="477.00" height="1" fill="#e6e6e6"/><rect x="50.5" y="40.50" width="477.00" height="1" fill="#e6e6e6"/><text x="40.5" y="164.90" font-size="7.8" text-anchor="end" fill="#222" letter-spacing="0.3">0</text><text x="40.5" y="140.40" font-size="7.8" text-anchor="end" fill="#222" letter-spacing="0.3">100</text><text x="40.5" y="115.90" font-size="7.8" text-anchor="end" fill="#222" letter-spacing="0.3">200</text><text x="40.5" y="91.40" font-size="7.8" text-anchor="end" fill="#222" letter-spacing="0.3">300</text><text x="40.5" y="66.90" font-size="7.8" text-anchor="end" fill="#222" letter-spacing="0.3">400</text><text x="40.5" y="42.40" font-size="7.8" text-anchor="end" fill="#222" letter-spacing="0.3">500</text><rect x="55.19" y="123.32" width="10.5" height="40.18" fill="#ff0000" stroke="#2a2a2a" stroke-width="0.8"/><rect x="75.06" y="124.06" width="10.5" height="39.45" fill="#ff0000" stroke="#2a2a2a" stroke-width="0.8"/><rect x="94.94" y="123.32" width="10.5" height="40.18" fill="#ff0000" stroke="#2a2a2a" stroke-width="0.8"/><rect x="114.81" y="121.12" width="10.5" height="42.38" fill="#ff0000" stroke="#2a2a2a" stroke-width="0.8"/><rect x="134.69" y="119.65" width="10.5" height="43.85" fill="#ff0000" stroke="#2a2a2a" stroke-width="0.8"/><rect x="154.56" y="118.42" width="10.5" height="45.08" fill="#ff0000" stroke="#2a2a2a" stroke-width="0.8"/><rect x="174.44" y="112.30" width="10.5" height="51.20" fill="#99004c" stroke="#2a2a2a" stroke-width="0.8"/><rect x="194.31" y="115.48" width="10.5" height="48.02" fill="#ff0000" stroke="#2a2a2a" stroke-width="0.8"/><rect x="214.19" y="118.42" width="10.5" height="45.08" fill="#ff0000" stroke="#2a2a2a" stroke-width="0.8"/><rect x="234.06" y="120.38" width="10.5" height="43.12" fill="#ff0000" stroke="#2a2a2a" stroke-width="0.8"/><rect x="253.94" y="122.09" width="10.5" height="41.41" fill="#ff0000" stroke="#2a2a2a" stroke-width="0.8"/><rect x="273.81" y="123.32" width="10.5" height="40.18" fill="#ff0000" stroke="#2a2a2a" stroke-width="0.8"/><rect x="293.69" y="125.28" width="10.5" height="38.22" fill="#ff0000" stroke="#2a2a2a" stroke-width="0.8"/><rect x="313.56" y="124.55" width="10.5" height="38.95" fill="#ff0000" stroke="#2a2a2a" stroke-width="0.8"/><rect x="333.44" y="124.06" width="10.5" height="39.45" fill="#ff0000" stroke="#2a2a2a" stroke-width="0.8"/><rect x="353.31" y="124.06" width="10.5" height="39.45" fill="#ff0000" stroke="#2a2a2a" stroke-width="0.8"/><rect x="373.19" y="123.32" width="10.5" height="40.18" fill="#ff0000" stroke="#2a2a2a" stroke-width="0.8"/><rect x="393.06" y="123.32" width="10.5" height="40.18" fill="#ff0000" stroke="#2a2a2a" stroke-width="0.8"/><rect x="412.94" y="122.09" width="10.5" height="41.41" fill="#ff0000" stroke="#2a2a2a" stroke-width="0.8"/><rect x="432.81" y="121.12" width="10.5" height="42.38" fill="#ff0000" stroke="#2a2a2a" stroke-width="0.8"/><rect x="452.69" y="114.50" width="10.5" height="49.00" fill="#ff0000" stroke="#2a2a2a" stroke-width="0.8"/><rect x="472.56" y="107.40" width="10.5" height="56.10" fill="#99004c" stroke="#2a2a2a" stroke-width="0.8"/><rect x="492.44" y="104.70" width="10.5" height="58.80" fill="#99004c" stroke="#2a2a2a" stroke-width="0.8"/><rect x="512.31" y="102.50" width="10.5" height="61.00" fill="#99004c" stroke="#2a2a2a" stroke-width="0.8"/><rect x="50.5" y="163.00" width="477.00" height="1" fill="#ccd6eb"/><rect x="50.00" y="163.50" width="1" height="6" fill="#ccd6eb"/><rect x="69.88" y="163.50" width="1" height="6" fill="#ccd6eb"/><rect x="89.75" y="163.50" width="1" height="6" fill="#ccd6eb"/><rect x="109.62" y="163.50" width="1" height="6" fill="#ccd6eb"/><rect x="129.50" y="163.50" width="1" height="6" fill="#ccd6eb"/><rect x="149.38" y="163.50" width="1" height="6" fill="#ccd6eb"/><rect x="169.25" y="163.50" width="1" height="6" fill="#ccd6eb"/><rect x="189.12" y="163.50" width="1" height="6" fill="#ccd6eb"/><rect x="209.00" y="163.50" width="1" height="6" fill="#ccd6eb"/><rect x="228.88" y="163.50" width="1" height="6" fill="#ccd6eb"/><rect x="248.75" y="163.50" width="1" height="6" fill="#ccd6eb"/><rect x="268.62" y="163.50" width="1" height="6" fill="#ccd6eb"/><rect x="288.50" y="163.50" width="1" height="6" fill="#ccd6eb"/><rect x="308.38" y="163.50" width="1" height="6" fill="#ccd6eb"/><rect x="328.25" y="163.50" width="1" height="6" fill="#ccd6eb"/><rect x="348.12" y="163.50" width="1" height="6" fill="#ccd6eb"/><rect x="368.00" y="163.50" width="1" height="6" fill="#ccd6eb"/><rect x="387.88" y="163.50" width="1" height="6" fill="#ccd6eb"/><rect x="407.75" y="163.50" width="1" height="6" fill="#ccd6eb"/><rect x="427.62" y="163.50" width="1" height="6" fill="#ccd6eb"/><rect x="447.50" y="163.50" width="1" height="6" fill="#ccd6eb"/><rect x="467.38" y="163.50" width="1" height="6" fill="#ccd6eb"/><rect x="487.25" y="163.50" width="1" height="6" fill="#ccd6eb"/><rect x="507.12" y="163.50" width="1" height="6" fill="#ccd6eb"/><rect x="527.00" y="163.50" width="1" height="6" fill="#ccd6eb"/><text x="61.94" y="174.20" font-size="7.6" text-anchor="end" fill="#4a4a4a" letter-spacing="0.15" transform="rotate(-45 61.94 174.20)">8 PM</text><text x="81.81" y="174.20" font-size="7.6" text-anchor="end" fill="#4a4a4a" letter-spacing="0.15" transform="rotate(-45 81.81 174.20)">9 PM</text><text x="101.69" y="174.20" font-size="7.6" text-anchor="end" fill="#4a4a4a" letter-spacing="0.15" transform="rotate(-45 101.69 174.20)">10 PM</text><text x="121.56" y="174.20" font-size="7.6" text-anchor="end" fill="#4a4a4a" letter-spacing="0.15" transform="rotate(-45 121.56 174.20)">11 PM</text><text x="141.44" y="174.20" font-size="7.6" text-anchor="end" fill="#4a4a4a" letter-spacing="0.15" transform="rotate(-45 141.44 174.20)">1/14/21 12 AM</text><text x="161.31" y="174.20" font-size="7.6" text-anchor="end" fill="#4a4a4a" letter-spacing="0.15" transform="rotate(-45 161.31 174.20)">1 AM</text><text x="181.19" y="174.20" font-size="7.6" text-anchor="end" fill="#4a4a4a" letter-spacing="0.15" transform="rotate(-45 181.19 174.20)">2 AM</text><text x="201.06" y="174.20" font-size="7.6" text-anchor="end" fill="#4a4a4a" letter-spacing="0.15" transform="rotate(-45 201.06 174.20)">3 AM</text><text x="220.94" y="174.20" font-size="7.6" text-anchor="end" fill="#4a4a4a" letter-spacing="0.15" transform="rotate(-45 220.94 174.20)">4 AM</text><text x="240.81" y="174.20" font-size="7.6" text-anchor="end" fill="#4a4a4a" letter-spacing="0.15" transform="rotate(-45 240.81 174.20)">5 AM</text><text x="260.69" y="174.20" font-size="7.6" text-anchor="end" fill="#4a4a4a" letter-spacing="0.15" transform="rotate(-45 260.69 174.20)">6 AM</text><text x="280.56" y="174.20" font-size="7.6" text-anchor="end" fill="#4a4a4a" letter-spacing="0.15" transform="rotate(-45 280.56 174.20)">7 AM</text><text x="300.44" y="174.20" font-size="7.6" text-anchor="end" fill="#4a4a4a" letter-spacing="0.15" transform="rotate(-45 300.44 174.20)">8 AM</text><text x="320.31" y="174.20" font-size="7.6" text-anchor="end" fill="#4a4a4a" letter-spacing="0.15" transform="rotate(-45 320.31 174.20)">9 AM</text><text x="340.19" y="174.20" font-size="7.6" text-anchor="end" fill="#4a4a4a" letter-spacing="0.15" transform="rotate(-45 340.19 174.20)">10 AM</text><text x="360.06" y="174.20" font-size="7.6" text-anchor="end" fill="#4a4a4a" letter-spacing="0.15" transform="rotate(-45 360.06 174.20)">11 AM</text><text x="379.94" y="174.20" font-size="7.6" text-anchor="end" fill="#4a4a4a" letter-spacing="0.15" transform="rotate(-45 379.94 174.20)">12 PM</text><text x="399.81" y="174.20" font-size="7.6" text-anchor="end" fill="#4a4a4a" letter-spacing="0.15" transform="rotate(-45 399.81 174.20)">1 PM</text><text x="419.69" y="174.20" font-size="7.6" text-anchor="end" fill="#4a4a4a" letter-spacing="0.15" transform="rotate(-45 419.69 174.20)">2 PM</text><text x="439.56" y="174.20" font-size="7.6" text-anchor="end" fill="#4a4a4a" letter-spacing="0.15" transform="rotate(-45 439.56 174.20)">3 PM</text><text x="459.44" y="174.20" font-size="7.6" text-anchor="end" fill="#4a4a4a" letter-spacing="0.15" transform="rotate(-45 459.44 174.20)">4 PM</text><text x="479.31" y="174.20" font-size="7.6" text-anchor="end" fill="#4a4a4a" letter-spacing="0.15" transform="rotate(-45 479.31 174.20)">5 PM</text><text x="499.19" y="174.20" font-size="7.6" text-anchor="end" fill="#4a4a4a" letter-spacing="0.15" transform="rotate(-45 499.19 174.20)">6 PM</text><text x="519.06" y="174.20" font-size="7.6" text-anchor="end" fill="#4a4a4a" letter-spacing="0.15" transform="rotate(-45 519.06 174.20)">7 PM</text><text x="267" y="15.800000000000011" font-size="12.4" text-anchor="middle" fill="#333">Bishkek – PM2.5</text><text x="20" y="99" font-size="8" text-anchor="middle" fill="#222" transform="rotate(-90 20 99)">AQI</text></svg></div>
<div class="abs" style="left:557px;top:370px;width:168px;height:195px;background:#eeeeee;border-left:1px solid #034b85;border-right:1px solid #034b85"></div>
<div class="abs" style="left:557px;top:370px;width:168px;height:49.6px;background:#034b85"></div>
<div class="abs" style="left:558px;top:419.6px;width:166px;height:77px;background:#99004c"></div>
<div class="abs" style="left:558px;top:496.6px;width:166px;height:1px;background:#fff"></div>
<div class="t" style="left:557.00px;top:375.54px;width:168px;font-size:10px;line-height:11.170px;text-align:center;font-weight:bold;color:#fff;">Current Conditions</div>
<div class="t" style="left:557.00px;top:391.83px;width:168px;font-size:8px;line-height:8.936px;text-align:center;font-weight:bold;color:#fff;">observed at</div>
<div class="t" style="left:557.00px;top:403.54px;width:168px;font-size:10px;line-height:11.170px;text-align:center;font-weight:bold;color:#fff;">Jan 14, 2021 7:00 PM (LT)</div>
<div class="t" style="left:557.00px;top:433.03px;width:168px;font-size:13.2px;line-height:14.744px;text-align:center;font-weight:bold;color:#fff;">249 AQI</div>
<div class="t" style="left:557.00px;top:452.03px;width:168px;font-size:13.2px;line-height:14.744px;text-align:center;font-weight:bold;color:#fff;">Very Unhealthy</div>
<div class="t" style="left:557.00px;top:471.13px;width:168px;font-size:13.2px;line-height:14.744px;text-align:center;font-weight:bold;color:#fff;">PM2.5</div>
<div class="t" style="left:557.00px;top:504.91px;width:168px;font-size:7.9px;line-height:8.824px;text-align:center;font-weight:bold;color:#222;">Health Message</div>
<div class="t" style="left:561.00px;top:519.99px;width:170px;font-size:8.05px;line-height:8.992px;text-align:left;font-weight:normal;color:#5a5a5a;white-space:nowrap">AQI values between 201 and 300 trigger a</div>
<div class="t" style="left:561.00px;top:533.99px;width:170px;font-size:8.05px;line-height:8.992px;text-align:left;font-weight:normal;color:#5a5a5a;white-space:nowrap">health alert, meaning everyone may</div>
<div class="t" style="left:561.00px;top:547.99px;width:170px;font-size:8.05px;line-height:8.992px;text-align:left;font-weight:normal;color:#5a5a5a;white-space:nowrap">experience more serious health effects.</div>
</body></html>
